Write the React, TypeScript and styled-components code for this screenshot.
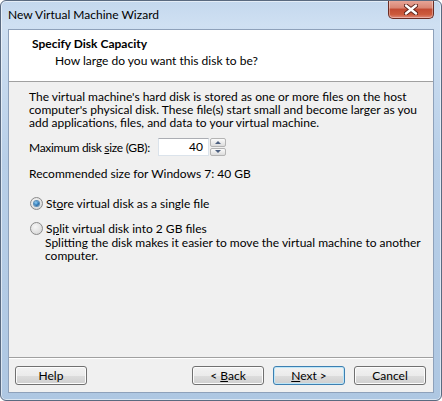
import * as React from "react";
import styled, { createGlobalStyle } from "styled-components";

const GlobalStyle = createGlobalStyle`
    html, body {
        margin: 0;
        padding: 0;
        background: #ffffff;
    }
    body {
        font-family: Lato, "Liberation Sans", sans-serif;
        font-size: 12px;
        color: #000;
    }
`;

const Window = styled.div`
    box-sizing: border-box;
    width: 442px;
    height: 401px;
    display: flex;
    flex-direction: column;
    border: 1px solid #5a6a80;
    border-radius: 6px;
    background: linear-gradient(180deg, #c4d8ee 0%, #cfe0f2 6%, #b8cfe8 40%, #aec7e2 100%);
    box-shadow: inset 0 0 0 1px rgba(255, 255, 255, 0.55);
    overflow: hidden;
`;

const TitleBar = styled.div`
    height: 28px;
    flex: none;
    display: flex;
    justify-content: space-between;
    align-items: flex-start;
    padding: 0 7px;
`;

const Title = styled.span`
    margin-top: 7px;
    font-size: 12px;
    line-height: 14px;
    color: #000;
`;

const CloseButton = styled.div`
    width: 46px;
    height: 19px;
    box-sizing: border-box;
    margin-top: -1px;
    border: 1px solid #6b2c24;
    border-top: none;
    border-radius: 0 0 5px 5px;
    background: linear-gradient(180deg, #e9a99c 0%, #d98472 45%, #c24a33 50%, #cc5a3c 80%, #e0897a 100%);
    box-shadow: inset 0 0 0 1px rgba(255, 255, 255, 0.35);
    display: flex;
    align-items: center;
    justify-content: center;
`;

const Client = styled.div`
    flex: 1;
    display: flex;
    flex-direction: column;
    margin: 0 7px 7px;
    border: 1px solid #8ea1ba;
    background: #f0f0f0;
`;

const Header = styled.div`
    height: 52px;
    flex: none;
    box-sizing: border-box;
    padding: 7px 0 0 23px;
    background: #ffffff;
    border-bottom: 1px solid #a0a0a0;
`;

const HeaderTitle = styled.div`
    font-weight: bold;
    line-height: 14px;
`;

const HeaderSub = styled.div`
    margin: 3px 0 0 23px;
    line-height: 14px;
`;

const Body = styled.div`
    flex: 1;
    display: flex;
    flex-direction: column;
    padding: 8px 12px 0 20px;
    white-space: nowrap;
`;

const Para = styled.p<{ $indent?: number; $top?: number }>`
    margin: ${({ $top }) => $top ?? 0}px 0 0 ${({ $indent }) => $indent ?? 0}px;
    line-height: 13px;
`;

const FieldRow = styled.div`
    display: flex;
    align-items: center;
    margin-top: 9px;
    height: 18px;
`;

const FieldLabel = styled.label`
    width: 129px;
    line-height: 13px;
    letter-spacing: -0.3px;
`;

const NumberBox = styled.div`
    box-sizing: border-box;
    width: 51px;
    height: 18px;
    background: #fff;
    border: 1px solid #dbe3eb;
    border-top-color: #abadb3;
    text-align: right;
    padding-right: 5px;
    line-height: 16px;
`;

const Spinner = styled.div`
    display: flex;
    flex-direction: column;
    margin-left: 1px;
    width: 16px;
    height: 18px;
    gap: 1px;
`;

const SpinButton = styled.div`
    flex: 1;
    box-sizing: border-box;
    border: 1px solid #b4b4b4;
    border-radius: 2px;
    background: linear-gradient(180deg, #fbfbfb 0%, #ececec 50%, #dcdcdc 100%);
    display: flex;
    align-items: center;
    justify-content: center;
`;

const Arrow = styled.span<{ $down?: boolean }>`
    width: 0;
    height: 0;
    border-left: 3px solid transparent;
    border-right: 3px solid transparent;
    ${({ $down }) =>
        $down ? "border-top: 3px solid #4c5f7f;" : "border-bottom: 3px solid #4c5f7f;"}
`;

const RadioRow = styled.label<{ $top: number }>`
    display: flex;
    align-items: center;
    margin-top: ${({ $top }) => $top}px;
    height: 13px;
    line-height: 13px;
`;

const RadioCircle = styled.span<{ $checked?: boolean }>`
    box-sizing: border-box;
    width: 13px;
    height: 13px;
    margin-left: 1px;
    margin-right: 3px;
    border-radius: 50%;
    border: 1px solid #8a8a8a;
    background: radial-gradient(circle at 40% 35%, #f6f6f6 0%, #e2e2e2 55%, #cfcfcf 100%);
    display: flex;
    align-items: center;
    justify-content: center;
    &::after {
        content: "";
        display: ${({ $checked }) => ($checked ? "block" : "none")};
        width: 5px;
        height: 5px;
        border-radius: 50%;
        background: radial-gradient(circle at 40% 35%, #8fd0f6 0%, #2e78b8 55%, #17456e 100%);
        box-shadow: 0 0 0 1px #5c8fb8;
    }
`;

const Mn = styled.span`
    text-decoration: underline;
    text-underline-offset: 1px;
`;

const Footer = styled.div`
    flex: none;
    display: flex;
    align-items: center;
    border-top: 1px solid #a0a0a0;
    box-shadow: inset 0 1px 0 #ffffff;
    padding: 8px 7px 7px 6px;
`;

const Spacer = styled.div`
    flex: 1;
`;

const Button = styled.button<{ $default?: boolean }>`
    box-sizing: border-box;
    width: 72px;
    height: 19px;
    padding: 0;
    font-family: inherit;
    font-size: 12px;
    color: #000;
    border: 1px solid ${({ $default }) => ($default ? "#3c7fb1" : "#707070")};
    border-radius: 3px;
    background: linear-gradient(180deg, #f2f2f2 0%, #ebebeb 50%, #dddddd 51%, #cfcfcf 100%);
    box-shadow: inset 0 0 0 1px ${({ $default }) => ($default ? "#bde6f8" : "#fcfcfc")};
    & + & {
        margin-left: 9px;
    }
`;

const CloseGlyph = () => (
    <svg width="14" height="11" viewBox="0 0 14 11">
        <path d="M2 1.5 L12 9.5 M12 1.5 L2 9.5" stroke="#5a2018" strokeWidth="4.2" strokeLinecap="round" />
        <path d="M2 1.5 L12 9.5 M12 1.5 L2 9.5" stroke="#ffffff" strokeWidth="2.4" strokeLinecap="round" />
    </svg>
);

const App: React.FC = () => {
    return (
        <>
            <GlobalStyle />
            <Window>
                <TitleBar>
                    <Title>New Virtual Machine Wizard</Title>
                    <CloseButton>
                        <CloseGlyph />
                    </CloseButton>
                </TitleBar>
                <Client>
                    <Header>
                        <HeaderTitle>Specify Disk Capacity</HeaderTitle>
                        <HeaderSub>How large do you want this disk to be?</HeaderSub>
                    </Header>
                    <Body>
                        <Para>
                            The virtual machine's hard disk is stored as one or more files on the host
                            <br />
                            computer's physical disk. These file(s) start small and become larger as you
                            <br />
                            add applications, files, and data to your virtual machine.
                        </Para>
                        <FieldRow>
                            <FieldLabel>
                                Maximum disk <Mn>s</Mn>ize (GB):
                            </FieldLabel>
                            <NumberBox>40</NumberBox>
                            <Spinner>
                                <SpinButton>
                                    <Arrow />
                                </SpinButton>
                                <SpinButton>
                                    <Arrow $down />
                                </SpinButton>
                            </Spinner>
                        </FieldRow>
                        <Para $top={11}>Recommended size for Windows 7: 40 GB</Para>
                        <RadioRow $top={17}>
                            <RadioCircle $checked />
                            <span>
                                St<Mn>o</Mn>re virtual disk as a single file
                            </span>
                        </RadioRow>
                        <RadioRow $top={12}>
                            <RadioCircle />
                            <span>
                                S<Mn>p</Mn>lit virtual disk into 2 GB files
                            </span>
                        </RadioRow>
                        <Para $indent={16} $top={1}>
                            Splitting the disk makes it easier to move the virtual machine to another
                            <br />
                            computer.
                        </Para>
                    </Body>
                    <Footer>
                        <Button>Help</Button>
                        <Spacer />
                        <Button>
                            &lt; <Mn>B</Mn>ack
                        </Button>
                        <Button $default>
                            <Mn>N</Mn>ext &gt;
                        </Button>
                        <Button>Cancel</Button>
                    </Footer>
                </Client>
            </Window>
        </>
    );
};

export default App;
